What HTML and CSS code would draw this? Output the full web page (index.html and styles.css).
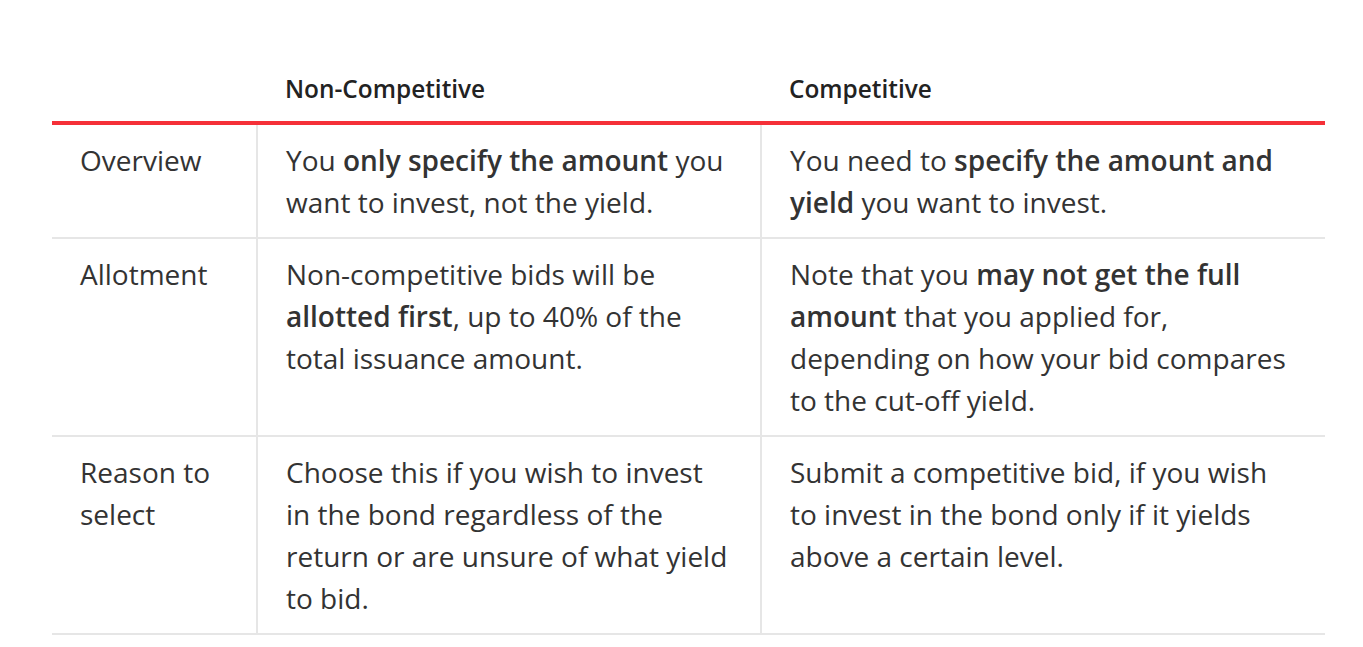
FILE: index.html
```html
<!DOCTYPE html>
<html>
<head>
<meta charset="utf-8">
<link rel="stylesheet" href="styles.css">
</head>
<body>
<div class="wrap">
<table class="cmp">
  <colgroup>
    <col class="c1"><col class="c2"><col class="c3">
  </colgroup>
  <thead>
    <tr><th></th><th>Non-Competitive</th><th>Competitive</th></tr>
  </thead>
  <tbody>
    <tr>
      <td>Overview</td>
      <td>You <b>only specify the amount</b> you want to invest, not the yield.</td>
      <td>You need to <b>specify the amount and yield</b> you want to invest.</td>
    </tr>
    <tr>
      <td>Allotment</td>
      <td>Non-competitive bids will be <b>allotted first</b>, up to 40% of the total issuance amount.</td>
      <td>Note that you <b>may not get the full amount</b> that you applied for, depending on how your bid compares to the cut-off yield.</td>
    </tr>
    <tr>
      <td>Reason to select</td>
      <td>Choose this if you wish to invest in the bond regardless of the return or are unsure of what yield to bid.</td>
      <td>Submit a competitive bid, if you wish to invest in the bond only if it yields above a certain level.</td>
    </tr>
  </tbody>
</table>
</div>
</body>
</html>
```
FILE: styles.css
```css
html, body { margin: 0; padding: 0; background: #fff; }
body { font-family: "Open Sans", "Noto Sans", sans-serif; color: #333; }
.wrap { padding: 60px 38px 0 52px; }
.cmp { width: 1273px; border-collapse: collapse; table-layout: fixed; }
.c1 { width: 205px; }
.c2 { width: 504px; }
.c3 { width: 564px; }
.cmp th {
  text-align: left; font-size: 24.4px; font-weight: 600; color: #222;
  padding: 15px 28px 18px 28px; line-height: 28px;
  border-bottom: 4px solid #f53038;
}
.cmp td {
  vertical-align: top; font-size: 28px; line-height: 42px;
  padding: 14px 28px 14px 28px;
  border-bottom: 2px solid #e6e6e6;
}
.cmp td + td { border-left: 2px solid #e6e6e6; }
.cmp b { font-weight: 600; }
```
